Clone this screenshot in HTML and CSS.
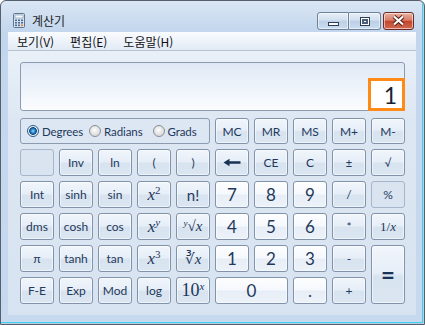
FILE: index.html
```html
<!DOCTYPE html>
<html lang="ko">
<head>
    <meta charset="UTF-8">
    <title>계산기</title>
    <link rel="stylesheet" href="styles.css">
</head>
<body>
    <div class="window">
        <div class="titlebar">
            <svg class="app-icon" width="12" height="15" viewBox="0 0 12 15">
                <rect x="0.5" y="0.5" width="11" height="14" rx="1" fill="#d6e2ef" stroke="#61758f"/>
                <rect x="2" y="2" width="8" height="3" fill="#f4f8fc" stroke="#7f93ab" stroke-width="0.6"/>
                <g fill="#4f6f98">
                    <rect x="2" y="6.5" width="2" height="1.6"/><rect x="5" y="6.5" width="2" height="1.6"/><rect x="8" y="6.5" width="2" height="1.6"/>
                    <rect x="2" y="9" width="2" height="1.6"/><rect x="5" y="9" width="2" height="1.6"/><rect x="8" y="9" width="2" height="1.6"/>
                    <rect x="2" y="11.5" width="2" height="1.6"/><rect x="5" y="11.5" width="2" height="1.6"/>
                </g>
                <rect x="8" y="11.5" width="2" height="1.6" fill="#e0812a"/>
            </svg>
            <span class="title">계산기</span>
            <div class="caption">
                <div class="cap-btn min"><span class="glyph-min"></span></div>
                <div class="cap-btn max"><span class="glyph-max"></span></div>
                <div class="cap-btn close">
                    <svg width="13" height="11" viewBox="0 0 13 11">
                        <path d="M2 1.5 L6.5 5.5 L11 1.5 M2 9.5 L6.5 5.5 L11 9.5" stroke="#4a1a14" stroke-width="4" fill="none"/>
                        <path d="M2 1.5 L6.5 5.5 L11 1.5 M2 9.5 L6.5 5.5 L11 9.5" stroke="#ffffff" stroke-width="2.2" fill="none"/>
                    </svg>
                </div>
            </div>
        </div>

        <div class="menubar">
            <span>보기(V)</span>
            <span>편집(E)</span>
            <span>도움말(H)</span>
        </div>

        <div class="client">
            <div class="display">
                <div class="current">1</div>
            </div>

            <div class="keys">
                <div class="units">
                    <label class="unit u-deg"><span class="radio on"></span>Degrees</label>
                    <label class="unit u-rad"><span class="radio"></span>Radians</label>
                    <label class="unit"><span class="radio"></span>Grads</label>
                </div>
                <button class="key">MC</button>
                <button class="key">MR</button>
                <button class="key">MS</button>
                <button class="key">M+</button>
                <button class="key">M-</button>

                <button class="key off"></button>
                <button class="key">Inv</button>
                <button class="key">ln</button>
                <button class="key">(</button>
                <button class="key">)</button>
                <button class="key">
                    <svg width="18" height="9" viewBox="0 0 18 9">
                        <path d="M0.5 4.5 L6.5 0.8 L6.5 3.3 L17.5 3.3 L17.5 5.7 L6.5 5.7 L6.5 8.2 Z" fill="#1a3354"/>
                    </svg>
                </button>
                <button class="key">CE</button>
                <button class="key">C</button>
                <button class="key small">±</button>
                <button class="key small">√</button>

                <button class="key">Int</button>
                <button class="key">sinh</button>
                <button class="key">sin</button>
                <button class="key math"><span><i>x</i><sup>2</sup></span></button>
                <button class="key big">n!</button>
                <button class="key num">7</button>
                <button class="key num">8</button>
                <button class="key num">9</button>
                <button class="key">/</button>
                <button class="key off">%</button>

                <button class="key">dms</button>
                <button class="key">cosh</button>
                <button class="key">cos</button>
                <button class="key math"><span><i>x</i><sup><i>y</i></sup></span></button>
                <button class="key math rootkey"><span><sup class="root"><i>y</i></sup>√<i>x</i></span></button>
                <button class="key num">4</button>
                <button class="key num">5</button>
                <button class="key num">6</button>
                <button class="key">*</button>
                <button class="key math mini"><span>1/<i>x</i></span></button>

                <button class="key">π</button>
                <button class="key">tanh</button>
                <button class="key">tan</button>
                <button class="key math"><span><i>x</i><sup>3</sup></span></button>
                <button class="key math rootkey"><span>∛<i>x</i></span></button>
                <button class="key num">1</button>
                <button class="key num">2</button>
                <button class="key num">3</button>
                <button class="key">-</button>
                <button class="key equals">=</button>

                <button class="key">F-E</button>
                <button class="key">Exp</button>
                <button class="key">Mod</button>
                <button class="key">log</button>
                <button class="key math ten"><span>10<sup><i>x</i></sup></span></button>
                <button class="key num zero">0</button>
                <button class="key num">.</button>
                <button class="key">+</button>
            </div>
        </div>
    </div>
</body>
</html>
```

FILE: styles.css
```css
* {
    box-sizing: border-box;
}

body {
    margin: 0;
    font-family: Lato, "Noto Sans CJK KR", sans-serif;
}

.window {
    width: 425px;
    height: 325px;
    border: 1px solid #56606d;
    border-radius: 6px 6px 0 0;
    background: linear-gradient(180deg, #dae6f4 0, #c2d6ed 31px, #c6d9ef 100%);
    box-shadow: inset -1px -1px 0 #b9cde4, inset -2px -2px 0 #3fd2ee;
    padding: 0 8px 9px 7px;
    display: flex;
    flex-direction: column;
}

.titlebar {
    height: 31px;
    padding-top: 8px;
    display: flex;
    align-items: center;
}

.app-icon {
    margin-left: 5px;
}

.title {
    margin-left: 7px;
    font-family: "Noto Sans CJK KR", sans-serif;
    font-size: 12px;
    color: #1b1b1b;
}

.caption {
    margin-left: auto;
    margin-right: 2px;
    display: flex;
}

.cap-btn {
    height: 18px;
    display: flex;
    align-items: center;
    justify-content: center;
    border: 1px solid #6f8198;
    box-shadow: inset 0 0 0 1px rgba(255, 255, 255, 0.55);
    background: linear-gradient(180deg, #e6eef8 0%, #d3e0ef 45%, #bccfe6 50%, #c9dbef 100%);
}

.min {
    width: 32px;
    border-radius: 3px 0 0 3px;
}

.max {
    width: 32px;
    border-left: none;
    border-radius: 0 3px 3px 0;
}

.close {
    width: 31px;
    margin-left: 2px;
    border-radius: 3px;
    border-color: #6b2a24;
    background: linear-gradient(180deg, #eab1a2 0%, #d97c66 45%, #c4452d 52%, #d06a51 100%);
}

.glyph-min {
    width: 11px;
    height: 4px;
    margin-top: 7px;
    background: #fff;
    border: 1px solid #2e3e55;
}

.glyph-max {
    width: 10px;
    height: 9px;
    margin-top: 2px;
    background: #fff;
    border: 1px solid #2e3e55;
    box-shadow: inset 0 0 0 1px #fff, inset 0 0 0 3px #4d5f78;
}

.menubar {
    height: 19px;
    border-bottom: 1px solid #b8c3d2;
    background: linear-gradient(180deg, #fafcfe 0%, #eef3fa 50%, #e2eaf5 100%);
    display: flex;
    align-items: center;
    gap: 16px;
    padding-left: 9px;
    font-family: "Noto Sans CJK KR", sans-serif;
    font-size: 12px;
    color: #111;
}

.client {
    flex: 1;
    padding: 11px 11px 0 12px;
    background: linear-gradient(180deg, #e9f0f8 0, #dde7f3 70px, #d8e3f1 100%);
}

.display {
    position: relative;
    height: 49px;
    border: 1px solid #8d9bb0;
    border-radius: 3px;
    background: linear-gradient(180deg, #dfe9f6 0%, #eaf1f9 40%, #fbfcfe 100%);
}

.current {
    position: absolute;
    right: -1px;
    bottom: -1px;
    width: 37px;
    height: 33px;
    border: 3px solid #ff8b16;
    background: #fff;
    display: flex;
    align-items: center;
    justify-content: flex-end;
    padding-right: 5px;
    font-size: 23px;
    color: #172133;
}

.keys {
    margin-top: 7px;
    display: grid;
    grid-template-columns: repeat(10, 34px);
    grid-template-rows: 26px repeat(5, 27px);
    gap: 5px;
}

.units {
    grid-column: span 5;
    border: 1px solid #8d9bb0;
    border-radius: 3px;
    display: flex;
    align-items: center;
    padding-left: 6px;
    font-size: 11.5px;
    letter-spacing: -0.1px;
    color: #1e395b;
}

.unit {
    display: flex;
    align-items: center;
    gap: 3px;
}

.u-deg {
    margin-right: 6px;
}

.u-rad {
    margin-right: 10px;
}

.radio {
    width: 12px;
    height: 12px;
    border-radius: 50%;
    border: 1px solid #8c8e91;
    background: radial-gradient(circle at 45% 40%, #ffffff 0, #e9e9e9 3px, #cfd2d6 100%);
}

.radio.on {
    border-color: #2c5a86;
    background: radial-gradient(circle at 50% 50%, #8fdcff 0, #2a86d0 2px, #0c4a85 3.5px, #f4f4f4 4.3px, #dedede 100%);
}

.key {
    padding: 0;
    border: 1px solid #8193ab;
    border-radius: 3px;
    background: linear-gradient(180deg, #f1f5fb 0%, #e6eef8 47%, #d8e3f0 53%, #dce6f3 100%);
    box-shadow: inset 0 0 0 1px rgba(255, 255, 255, 0.55);
    color: #1e395b;
    font-family: Lato, sans-serif;
    font-size: 12px;
    display: flex;
    align-items: center;
    justify-content: center;
}

.key.num {
    font-size: 17px;
    background: linear-gradient(180deg, #fdfeff 0%, #f5f8fc 47%, #e8eef7 53%, #edf2f9 100%);
}

.key.off {
    border-color: #a6b5c9;
    background: #dae4f1;
    box-shadow: none;
}

.key.small {
    font-size: 11px;
}

.key.big {
    font-size: 15px;
}

.key.math {
    font-family: "Liberation Serif", serif;
    font-size: 17px;
    color: #1d3658;
}

.key.math sup {
    font-size: 11px;
    vertical-align: 6px;
    line-height: 0;
}

.key.math i {
    font-style: italic;
}

.key.rootkey {
    font-size: 15px;
}

.key.math .root {
    font-size: 9px;
    vertical-align: 5px;
}

.key.mini {
    font-size: 13px;
}

.key.ten {
    font-size: 18px;
}

.key.equals {
    grid-row: span 2;
    font-size: 24px;
    font-weight: bold;
    color: #1a3354;
}

.key.zero {
    grid-column: span 2;
}
```
